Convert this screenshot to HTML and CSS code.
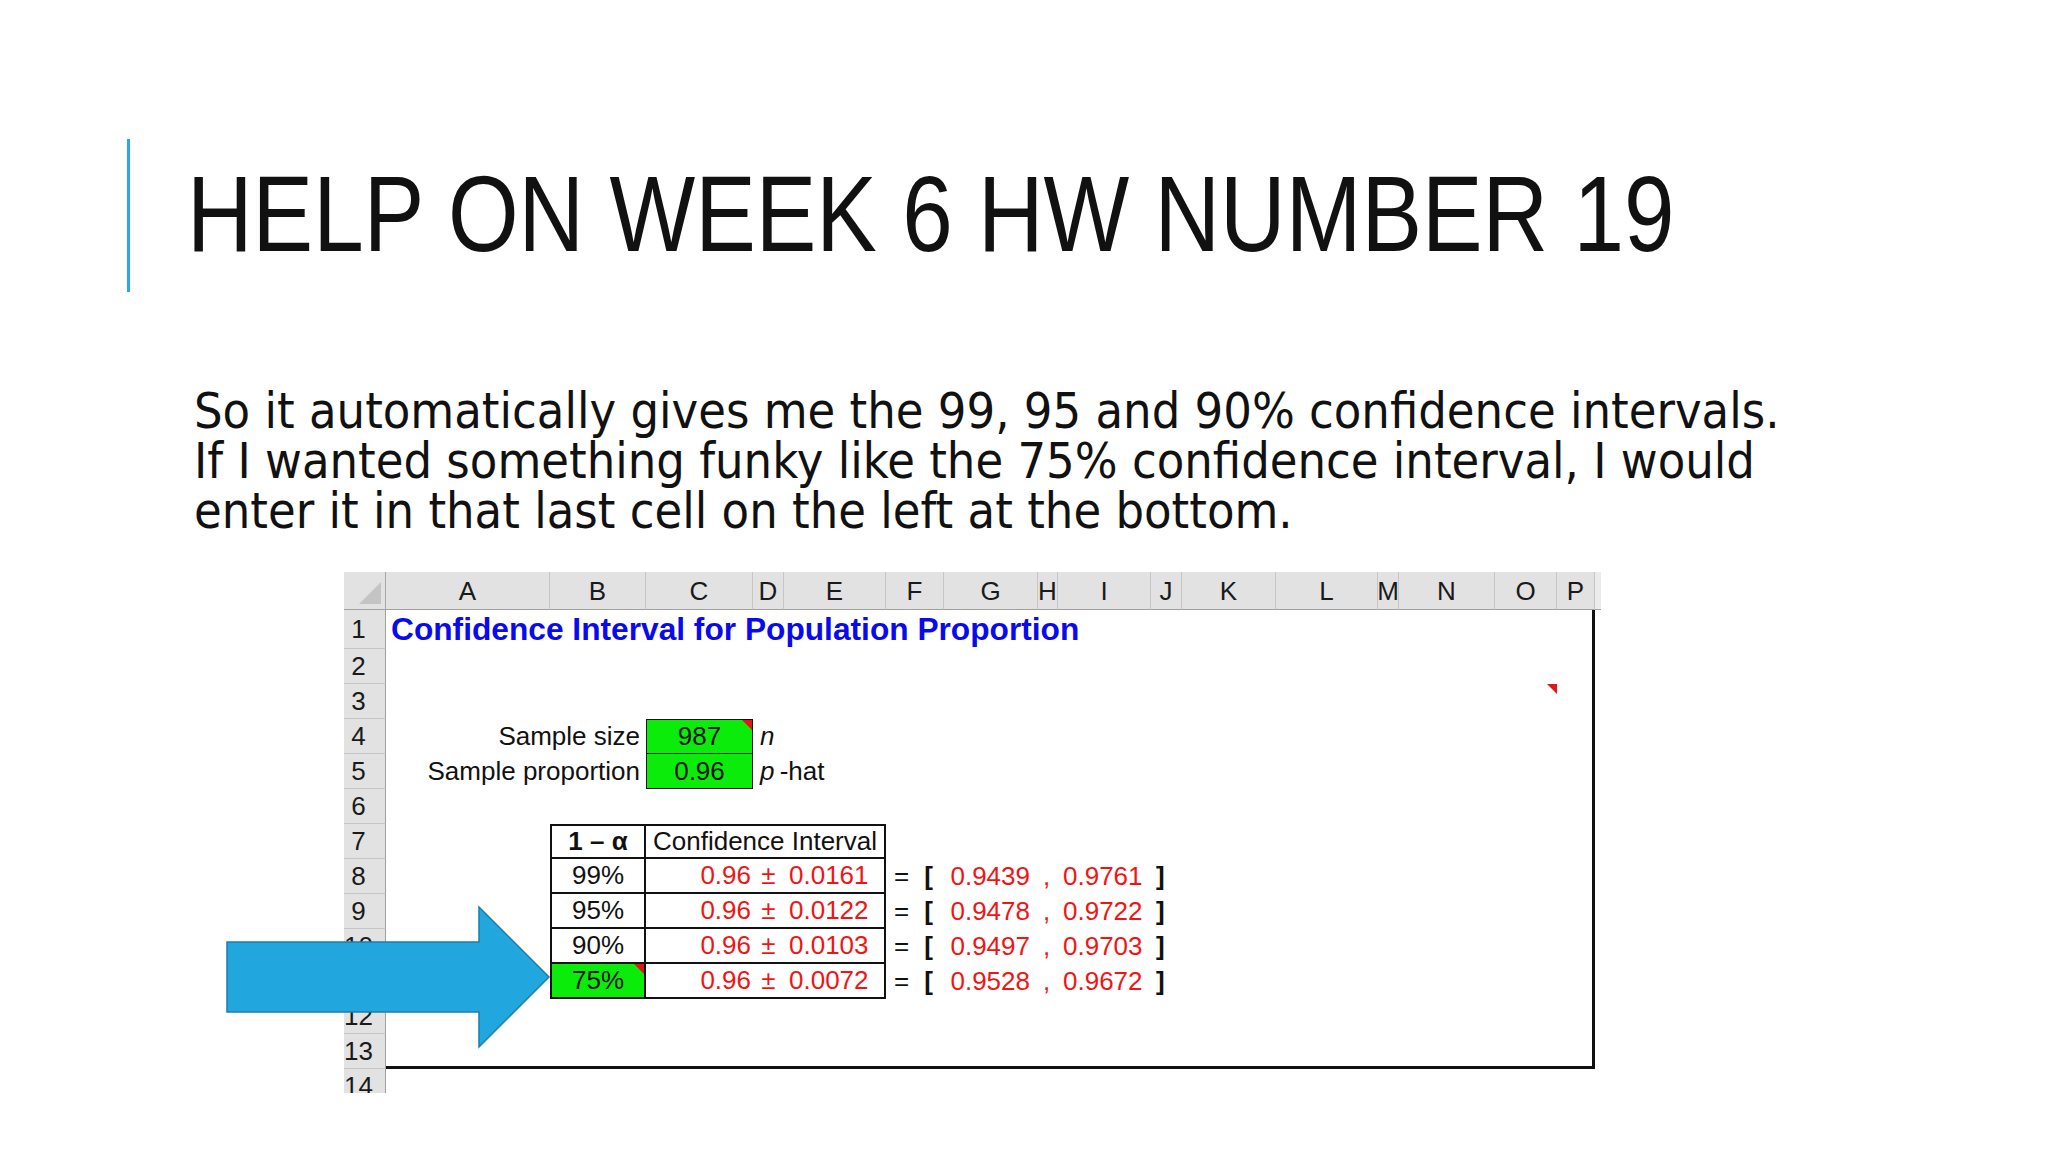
FILE: index.html
```html
<!DOCTYPE html>
<html>
<head>
<meta charset="utf-8">
<link rel="stylesheet" href="styles.css">
</head>
<body>
<div class="slide">
  <header class="title-row">
    <div class="accent"></div>
    <h1 class="title">HELP ON WEEK 6 HW NUMBER 19</h1>
  </header>
  <p class="body-text">So it automatically gives me the 99, 95 and 90% confidence intervals.<br>If I wanted something funky like the 75% confidence interval, I would<br>enter it in that last cell on the left at the bottom.</p>

  <div class="sheet-wrap">
    <div class="sheet">
      <div class="corner"><span class="corner-tri"></span></div>
      <div class="ch c2">A</div>
      <div class="ch c3">B</div>
      <div class="ch c4">C</div>
      <div class="ch c5">D</div>
      <div class="ch c6">E</div>
      <div class="ch c7">F</div>
      <div class="ch c8">G</div>
      <div class="ch c9">H</div>
      <div class="ch c10">I</div>
      <div class="ch c11">J</div>
      <div class="ch c12">K</div>
      <div class="ch c13">L</div>
      <div class="ch c14">M</div>
      <div class="ch c15">N</div>
      <div class="ch c16">O</div>
      <div class="ch c17">P</div>
      <div class="ch c18 ch-extra"></div>

      <div class="rh r2">1</div>
      <div class="rh r3">2</div>
      <div class="rh r4">3</div>
      <div class="rh r5">4</div>
      <div class="rh r6">5</div>
      <div class="rh r7">6</div>
      <div class="rh r8">7</div>
      <div class="rh r9">8</div>
      <div class="rh r10">9</div>
      <div class="rh r11">10</div>
      <div class="rh r12">11</div>
      <div class="rh r13">12</div>
      <div class="rh r14">13</div>
      <div class="rh r15">14</div>

      <div class="sheet-body"></div>

      <div class="cell sheet-title">Confidence Interval for Population Proportion</div>

      <div class="cell o3"><span class="flag"></span></div>

      <div class="cell label r5">Sample size</div>
      <div class="cell label r6">Sample proportion</div>
      <div class="cell green g4">987<span class="flag"></span></div>
      <div class="cell green g5">0.96</div>
      <div class="cell sym r5"><i>n</i></div>
      <div class="cell sym r6"><i>p</i>&thinsp;-hat</div>

      <div class="ci">
        <div class="ci-b ci-top"><b>1 – α</b></div>
        <div class="ci-head ci-top">Confidence Interval</div>

        <div class="ci-b">99%</div>
        <div class="ci-c red">0.96</div>
        <div class="ci-d red">±</div>
        <div class="ci-e red">0.0161</div>

        <div class="ci-b">95%</div>
        <div class="ci-c red">0.96</div>
        <div class="ci-d red">±</div>
        <div class="ci-e red">0.0122</div>

        <div class="ci-b">90%</div>
        <div class="ci-c red">0.96</div>
        <div class="ci-d red">±</div>
        <div class="ci-e red">0.0103</div>

        <div class="ci-b ci-green">75%<span class="flag"></span></div>
        <div class="ci-c red">0.96</div>
        <div class="ci-d red">±</div>
        <div class="ci-e red">0.0072</div>
      </div>

      <div class="cell eq r9"><span>=</span><b class="brk">[</b></div>
      <div class="cell lo r9">0.9439</div>
      <div class="cell comma r9">,</div>
      <div class="cell hi r9">0.9761</div>
      <div class="cell close r9"><b>]</b></div>

      <div class="cell eq r10"><span>=</span><b class="brk">[</b></div>
      <div class="cell lo r10">0.9478</div>
      <div class="cell comma r10">,</div>
      <div class="cell hi r10">0.9722</div>
      <div class="cell close r10"><b>]</b></div>

      <div class="cell eq r11"><span>=</span><b class="brk">[</b></div>
      <div class="cell lo r11">0.9497</div>
      <div class="cell comma r11">,</div>
      <div class="cell hi r11">0.9703</div>
      <div class="cell close r11"><b>]</b></div>

      <div class="cell eq r12"><span>=</span><b class="brk">[</b></div>
      <div class="cell lo r12">0.9528</div>
      <div class="cell comma r12">,</div>
      <div class="cell hi r12">0.9672</div>
      <div class="cell close r12"><b>]</b></div>
    </div>

    <svg class="arrow" width="328" height="146" viewBox="0 0 328 146">
      <polygon points="2,37 254,37 254,2 324,72 254,142 254,107 2,107" fill="#21a6dd" stroke="#1a7fae" stroke-width="1.5"/>
    </svg>
  </div>
</div>
</body>
</html>
```

FILE: styles.css
```css
body {
  margin: 0;
  background: #fff;
}

.slide {
  width: 2048px;
  height: 1152px;
  overflow: hidden;
  background: #fff;
  font-family: "Liberation Sans", Arial, sans-serif;
  color: #111;
}

/* ---------- title ---------- */
.title-row {
  display: flex;
  align-items: flex-start;
  padding: 139px 0 0 127px;
}

.accent {
  flex: none;
  width: 3px;
  height: 153px;
  background: #2aa8df;
}

.title {
  margin: 22px 0 0 57px;
  font-size: 107px;
  line-height: 1;
  font-weight: 400;
  white-space: nowrap;
  color: #111;
  transform: scaleX(0.849);
  transform-origin: left top;
}

/* ---------- body text ---------- */
.body-text {
  margin: 94px 0 0 194px;
  font-family: "DejaVu Sans", "Liberation Sans", sans-serif;
  font-size: 50px;
  line-height: 50px;
  white-space: nowrap;
  color: #111;
  transform: scaleX(0.901);
  transform-origin: left top;
}

/* ---------- spreadsheet ---------- */
.sheet-wrap {
  position: relative;
  margin: 36px 0 0 344px;
  width: 1257px;
}

.sheet {
  display: grid;
  grid-template-columns: 42px 164px 96px 107px 31px 102px 58px 94px 20px 93px 31px 94px 102px 21px 96px 62px 38px 6px;
  grid-template-rows: 38px 39px repeat(12, 35px) 35px;
  height: 521px;
  overflow: hidden;
  font-size: 26px;
  color: #111;
}

.corner {
  grid-column: 1;
  grid-row: 1;
  position: relative;
  background: #e2e2e2;
  border-right: 1px solid #a8a8a8;
  border-bottom: 1px solid #a0a0a0;
}

.corner-tri {
  position: absolute;
  right: 4px;
  bottom: 5px;
  width: 0;
  height: 0;
  border-bottom: 22px solid #c4c4c4;
  border-left: 22px solid transparent;
}

.ch {
  grid-row: 1;
  display: flex;
  align-items: center;
  justify-content: center;
  background: #e2e2e2;
  border-right: 1px solid #c6c6c6;
  border-bottom: 1px solid #a0a0a0;
  color: #1a1a1a;
  font-size: 26px;
  padding-top: 2px;
}

.ch-extra {
  border-right: 0;
  background: #ebebeb;
}

.c2 { grid-column: 2; }
.c3 { grid-column: 3; }
.c4 { grid-column: 4; }
.c5 { grid-column: 5; }
.c6 { grid-column: 6; }
.c7 { grid-column: 7; }
.c8 { grid-column: 8; }
.c9 { grid-column: 9; }
.c10 { grid-column: 10; }
.c11 { grid-column: 11; }
.c12 { grid-column: 12; }
.c13 { grid-column: 13; }
.c14 { grid-column: 14; }
.c15 { grid-column: 15; }
.c16 { grid-column: 16; }
.c17 { grid-column: 17; }
.c18 { grid-column: 18; }

.rh {
  grid-column: 1;
  display: flex;
  align-items: center;
  justify-content: center;
  padding-right: 12px;
  background: #e2e2e2;
  border-bottom: 1px solid #c6c6c6;
  border-right: 1px solid #a0a0a0;
  color: #1a1a1a;
  font-size: 26px;
}

.r2 { grid-row: 2; }
.r3 { grid-row: 3; }
.r4 { grid-row: 4; }
.r5 { grid-row: 5; }
.r6 { grid-row: 6; }
.r7 { grid-row: 7; }
.r8 { grid-row: 8; }
.r9 { grid-row: 9; }
.r10 { grid-row: 10; }
.r11 { grid-row: 11; }
.r12 { grid-row: 12; }
.r13 { grid-row: 13; }
.r14 { grid-row: 14; }
.r15 { grid-row: 15; }

.sheet-body {
  grid-column: 2 / 18;
  grid-row: 2 / 15;
  background: #fff;
  border-right: 3px solid #111;
  border-bottom: 3px solid #111;
}

.cell {
  display: flex;
  align-items: center;
  white-space: nowrap;
  min-width: 0;
  position: relative;
}

.sheet-title {
  grid-column: 2 / 13;
  grid-row: 2;
  padding-left: 5px;
  font-size: 31.7px;
  font-weight: 700;
  color: #0a0aee;
}

.o3 {
  grid-column: 16;
  grid-row: 4;
}

.flag {
  position: absolute;
  top: 0;
  right: 0;
  width: 0;
  height: 0;
  border-top: 10px solid #e4141b;
  border-left: 10px solid transparent;
}

.label {
  grid-column: 2 / 4;
  justify-content: flex-end;
  padding-right: 6px;
}

.green {
  grid-column: 4;
  justify-content: center;
  background: #0bec0b;
  border: 1.5px solid #111;
}

.g4 { grid-row: 5; }
.g5 { grid-row: 6; border-top: 0; }

.sym {
  grid-column: 5 / 8;
  padding-left: 7px;
}

/* confidence interval table */
.ci {
  grid-column: 3 / 7;
  grid-row: 8 / 13;
  display: grid;
  grid-template-columns: 96px 107px 31px 102px;
  grid-template-rows: repeat(5, 35px);
}

.ci > div {
  display: flex;
  align-items: center;
  white-space: nowrap;
  border-bottom: 2px solid #111;
  position: relative;
}

.ci-top {
  border-top: 2px solid #111;
}

.ci-b {
  grid-column: 1;
  justify-content: center;
  border-left: 2px solid #111;
  border-right: 2px solid #111;
}

.ci-head {
  grid-column: 2 / 5;
  justify-content: center;
  border-right: 2px solid #111;
}

.ci-c {
  grid-column: 2;
  justify-content: flex-end;
  padding-right: 2px;
}

.ci-d {
  grid-column: 3;
  justify-content: center;
}

.ci-e {
  grid-column: 4;
  padding-left: 5px;
  border-right: 2px solid #111;
}

.ci-green {
  background: #0bec0b;
}

.red {
  color: #f01515;
}

/* interval bounds */
.eq {
  grid-column: 7;
  padding-left: 8px;
}

.brk {
  margin-left: 15px;
}

.lo {
  grid-column: 8;
  justify-content: flex-end;
  padding-right: 8px;
  color: #f01515;
}

.comma {
  grid-column: 9;
  padding-left: 5px;
  color: #f01515;
}

.hi {
  grid-column: 10;
  padding-left: 5px;
  color: #f01515;
}

.close {
  grid-column: 11;
  padding-left: 5px;
}

.arrow {
  position: absolute;
  left: -119px;
  top: 333px;
}
```
